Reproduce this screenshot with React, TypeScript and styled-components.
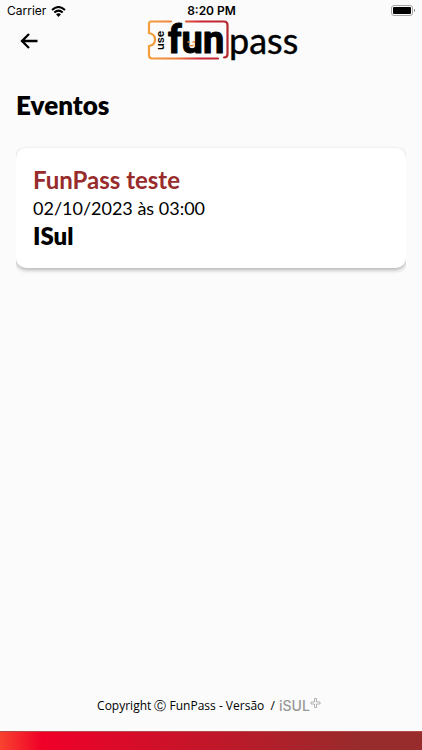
import React from "react";
import styled, { createGlobalStyle } from "styled-components";

const GlobalStyle = createGlobalStyle`
  * { box-sizing: border-box; }
  body {
    margin: 0;
    background: #fbfbfb;
    color: #000;
    font-family: Lato, "Open Sans", sans-serif;
  }
`;

const Screen = styled.div`
  display: flex;
  flex-direction: column;
  min-height: 100vh;
`;

const StatusBar = styled.div`
  display: grid;
  grid-template-columns: 1fr auto 1fr;
  align-items: center;
  height: 20px;
  padding: 2px 6px 0 7px;
  font: 12px/16px Inter, sans-serif;
`;

const Carrier = styled.span`
  display: flex;
  align-items: center;
  gap: 5px;
`;

const Clock = styled.span`
  font-weight: 600;
`;

const BatteryIcon = styled.svg`
  justify-self: end;
`;

const Header = styled.header`
  display: grid;
  grid-template-columns: 24px 1fr;
  align-items: center;
  height: 41px;
  padding: 0 16px;
`;

const BackButton = styled.button`
  display: flex;
  width: 26px;
  padding: 4px;
  border: 0;
  background: none;
  color: inherit;
  cursor: pointer;
`;

const Logo = styled.svg`
  display: block;
  justify-self: center;
  overflow: visible;
`;

const Content = styled.main`
  flex: 1;
  padding: 28px 16px 0;
`;

const Title = styled.h1`
  margin: 0;
  font-size: 26px;
  line-height: 32px;
  font-weight: 800;
`;

const EventList = styled.ul`
  margin: 20px 0 0;
  padding: 7px 0;
  list-style: none;
  overflow: hidden;
`;

const EventCard = styled.li`
  padding: 18px 17px;
  border-radius: 10px;
  background: #fff;
  box-shadow: 0 2px 4px rgba(0, 0, 0, 0.3);
`;

const EventName = styled.h2`
  margin: 0;
  color: #982b2b;
  font-size: 24px;
  line-height: 28px;
  font-weight: 700;
`;

const EventDate = styled.p`
  margin: 0;
  font-size: 18px;
  line-height: 28px;
`;

const EventPlace = styled.p`
  margin: 0;
  font-size: 24px;
  line-height: 28px;
  font-weight: 800;
`;

const Footer = styled.footer`
  display: flex;
  align-items: center;
  justify-content: center;
  gap: 3px;
  padding: 0 4px 16px 0;
  font-family: "Open Sans", sans-serif;
  font-size: 12px;
  line-height: 16px;
`;

const Strip = styled.div`
  height: 19px;
  border-top: 1px solid #b34848;
  background: linear-gradient(90deg, #f8432f 0%, #f00028 10%, #982b2b 85%);
`;

const FunPassLogo = () => (
  <Logo width="152" height="41" viewBox="0 0 152 41" role="img" aria-label="use funpass">
    <defs>
      <linearGradient id="ticket" x1="0" y1="0" x2="82" y2="0" gradientUnits="userSpaceOnUse">
        <stop offset="0" stopColor="#f2a23c" />
        <stop offset="0.35" stopColor="#ee7d3a" />
        <stop offset="0.65" stopColor="#cf2638" />
        <stop offset="1" stopColor="#b3282d" />
      </linearGradient>
    </defs>
    <path
      d="M24 1.500H4Q2 1.500 2 4V13Q8 14 8 19.500T2 26V35Q2 38.500 5 38.500H71M39 1.500H77Q80.500 1.500 80.500 5V34Q80.500 37.500 77 37.500"
      fill="none"
      stroke="url(#ticket)"
      strokeWidth="2.200"
      strokeLinecap="round"
    />
    <text transform="translate(17 30) rotate(-90)" fontFamily="Inter, sans-serif" fontSize="11" fontWeight="600">use</text>
    <text x="21" y="33" fontFamily="Roboto, sans-serif" fontSize="38" fontWeight="700" stroke="#000" strokeWidth="1" strokeLinejoin="round">fun</text>
    <path d="M40.500 22h2.500M45.500 22h2.500M42 25q2.200 1.500 4.500 0" fill="none" stroke="#ef873a" strokeWidth="1.400" />
    <text x="82" y="34" fontFamily="Lato, sans-serif" fontSize="36" stroke="#000" strokeWidth="0.400">pass</text>
  </Logo>
);

export default function App() {
  return (
    <>
      <GlobalStyle />
      <Screen>
        <StatusBar>
          <Carrier>
            Carrier
            <svg width="15" height="11" viewBox="0 0 15 11" aria-hidden="true">
              <path d="M1 4Q7.500-2 14 4M3.300 6.400Q7.500 2.800 11.700 6.400" fill="none" stroke="#000" strokeWidth="2" />
              <path d="M5 8.300Q7.500 6.300 10 8.300L7.500 11Z" />
            </svg>
          </Carrier>
          <Clock>8:20 PM</Clock>
          <BatteryIcon width="25" height="12" viewBox="0 0 25 12" aria-hidden="true">
            <rect x="0.500" y="0.500" width="21" height="10" rx="2.500" fill="none" stroke="#a5a5a5" />
            <rect x="2" y="2" width="18" height="7" rx="1" />
            <path d="M23 4v3q1-.3 1-1.500T23 4" fill="#777" />
          </BatteryIcon>
        </StatusBar>
        <Header>
          <BackButton aria-label="Voltar">
            <svg width="18" height="16" viewBox="0 0 18 16" fill="none" stroke="#000" strokeWidth="2.300" aria-hidden="true">
              <path d="M17.500 8H3M9 1L2 8l7 7" />
            </svg>
          </BackButton>
          <FunPassLogo />
        </Header>
        <Content>
          <Title>Eventos</Title>
          <EventList>
            <EventCard>
              <EventName>FunPass teste</EventName>
              <EventDate>02/10/2023 às 03:00</EventDate>
              <EventPlace>ISul</EventPlace>
            </EventCard>
          </EventList>
        </Content>
        <Footer>
          <span>Copyright Ⓒ FunPass - Versão&nbsp; /</span>
          <svg width="43" height="18" viewBox="0 0 43 18" role="img" aria-label="iSUL+">
            <text x="1" y="14" fontFamily="Inter, sans-serif" fontSize="14" fontWeight="500" fill="#999">iSUL</text>
            <path d="M36.500 1.500h2v3.500h3.500v2h-3.500v3.500h-2V7H33V5h3.500z" fill="none" stroke="#aaa" strokeWidth="0.900" />
          </svg>
        </Footer>
        <Strip />
      </Screen>
    </>
  );
}
